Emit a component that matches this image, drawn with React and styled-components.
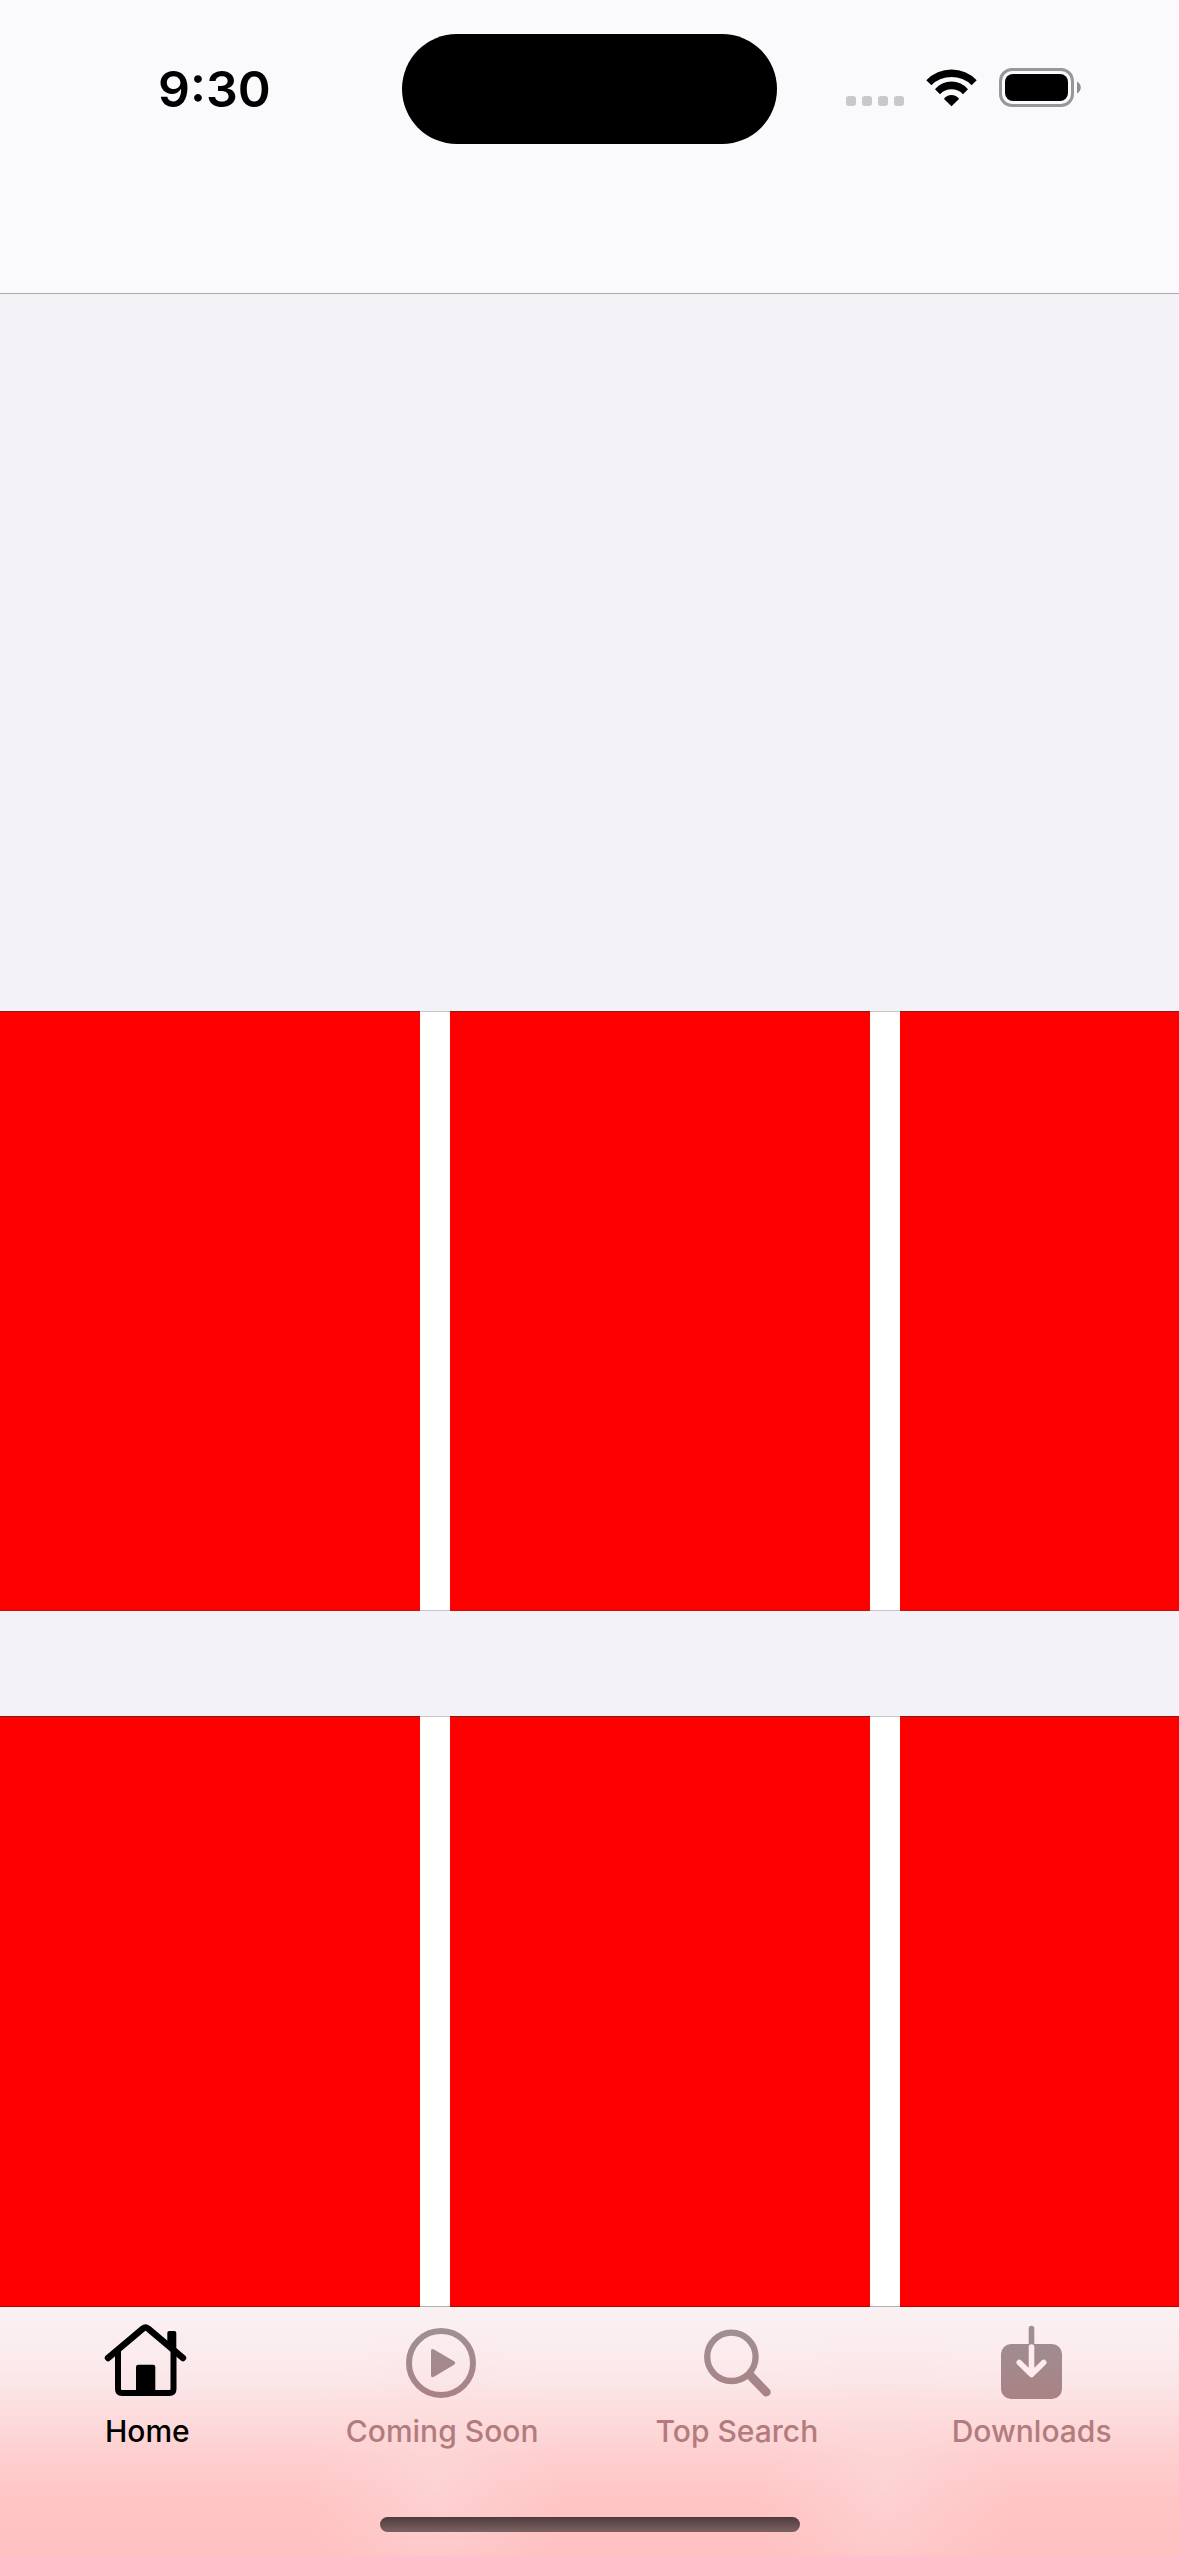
import React, { useState } from "react";
import styled, { createGlobalStyle } from "styled-components";

const GlobalStyle = createGlobalStyle`
  *, *::before, *::after { box-sizing: border-box; }
  body {
    margin: 0;
    background: #f2f2f7;
    font-family: Inter, "Liberation Sans", sans-serif;
    -webkit-font-smoothing: antialiased;
  }
`;

const Screen = styled.div`
  display: flex;
  flex-direction: column;
  height: 100vh;
  background: #f2f2f7;
`;

const Header = styled.header`
  flex: none;
  height: 294px;
  padding-top: 34px;
  background: #fafafc;
  border-bottom: 1px solid #a9a9ad;
`;

const StatusBar = styled.div`
  display: grid;
  grid-template-columns: 1fr 375px 1fr;
  align-items: center;
  height: 110px;
`;

const Time = styled.time`
  padding-left: 158px;
  font-size: 50px;
  line-height: 60px;
  font-weight: 600;
  color: #000;
`;

const Island = styled.div`
  height: 110px;
  border-radius: 55px;
  background: #000;
`;

const StatusIcons = styled.div`
  display: flex;
  justify-content: flex-end;
  align-items: flex-start;
  gap: 22px;
  padding: 0 98px 4px 0;

  svg { display: block; }
`;

const Feed = styled.main`
  flex: 1;
  min-height: 0;
  overflow-y: auto;
  scrollbar-width: none;
`;

const Hero = styled.section`
  height: 717px;
`;

const Shelf = styled.section`
  display: flex;
  gap: 30px;
  height: 600px;
  margin-bottom: 105px;
  overflow-x: auto;
  scrollbar-width: none;
  background: #fff;
  box-shadow: inset 0 1px #c6c6c8, inset 0 -1px #c6c6c8;
`;

const Poster = styled.article`
  flex: none;
  width: 420px;
  background: #f00;
  box-shadow: inset 0 1px #801c1f, inset 0 -1px #c61113;
`;

const BottomBar = styled.footer`
  position: relative;
  flex: none;
  display: flex;
  flex-direction: column;
  justify-content: space-between;
  height: 250px;
  margin-top: -1px;
  padding: 13px 0 24px;
  border-top: 1px solid rgba(0, 0, 0, 0.3);
  background:
    radial-gradient(ellipse 130px 170px at 37% 72%, rgba(251, 222, 222, 0.5), rgba(251, 222, 222, 0.2) 50%, rgba(251, 222, 222, 0)),
    radial-gradient(ellipse 130px 170px at 75% 72%, rgba(251, 222, 222, 0.5), rgba(251, 222, 222, 0.2) 50%, rgba(251, 222, 222, 0)),
    linear-gradient(#faf1f3 0, #fbebed 50px, #fbe5e7 80px, #fddadb 115px, #fecece 150px, #ffc5c5 195px, #ffc0c0 100%);
  background-clip: padding-box;
`;

const Tabs = styled.nav`
  display: grid;
  grid-template-columns: repeat(4, 1fr);
`;

const Tab = styled.button`
  display: flex;
  flex-direction: column;
  align-items: center;
  gap: 9px;
  padding: 0;
  border: 0;
  background: none;
  font-family: inherit;
  font-size: 30px;
  line-height: 36px;
  font-weight: 500;
  color: ${(p) => (p.$active ? "#000" : "#b27c7e")};
  cursor: pointer;
`;

const TabIcon = styled.svg`
  display: block;
  width: 90px;
  height: 84px;
  fill: none;
  stroke-linecap: round;
  stroke-linejoin: round;
`;

const HomeIndicator = styled.div`
  align-self: center;
  width: 420px;
  height: 15px;
  border-radius: 8px;
  background: linear-gradient(#4e3c3d, #7c6162);
`;

function SignalDots() {
  return (
    <svg width="58" height="38" viewBox="0 0 58 38" fill="#c8c8ca" aria-hidden="true">
      {[0, 16, 32, 48].map((x) => (
        <rect key={x} x={x} y="28" width="10" height="10" rx="3" />
      ))}
    </svg>
  );
}

function Wifi() {
  return (
    <svg width="51" height="39" viewBox="0 -1 51 39" fill="#000" aria-hidden="true">
      <path d="M0.3 11.2A35 35 0 0 1 50.7 11.2L45.6 16.2A28.7 28.7 0 0 0 5.4 16.2Z" />
      <path d="M9 20.2A21.5 21.5 0 0 1 42 20.2L37 25.2A15.7 15.7 0 0 0 14 25.2Z" />
      <path d="M18 30A9 9 0 0 1 33 30L25.5 37.3Z" />
    </svg>
  );
}

function Battery() {
  return (
    <svg width="82" height="39" viewBox="0 0 82 39" aria-hidden="true">
      <rect x="1.5" y="1.5" width="72" height="36" rx="11.5" fill="none" stroke="#979799" strokeWidth="3" />
      <rect x="6" y="6" width="63" height="27" rx="8" fill="#000" />
      <path d="M78 13.5C83 16 83 23 78 25.5Z" fill="#8e8e90" />
    </svg>
  );
}

function HomeIcon({ paint }) {
  return (
    <>
      <path d="M6 38L41 8.5Q43.5 6.5 46 8.5L81 38" stroke={paint} strokeWidth="6.4" />
      <path d="M16 31V69Q16 73 20 73H67.5Q71.5 73 71.5 69V31" stroke={paint} strokeWidth="6" />
      <path d="M65.3 24V13Q65.3 11 67.3 11H72.3Q74.3 11 74.3 13V33Z" fill={paint} />
      <path d="M34 73V47Q34 44.7 36.3 44.7H51Q53.3 44.7 53.3 47V73Z" fill={paint} />
    </>
  );
}

function PlayIcon({ paint }) {
  return (
    <>
      <circle cx="44" cy="43" r="32" stroke={paint} strokeWidth="6" />
      <path d="M34 31Q34 28 37 29.6L57 41.3Q59.4 43 57 44.7L37 56.7Q34 58.2 34 55Z" fill={paint} />
    </>
  );
}

function SearchIcon({ paint }) {
  return (
    <>
      <circle cx="39.4" cy="36.8" r="24.2" stroke={paint} strokeWidth="6.3" />
      <path d="M55 58.5L71 75C75.5 79.5 81.5 73 77.3 69L61.5 52.5Z" fill={paint} />
    </>
  );
}

function DownloadIcon({ paint }) {
  return (
    <>
      <rect x="14" y="24" width="61" height="55" rx="10" fill={paint} />
      <path d="M41.7 24V8.5A2.8 2.8 0 0 1 47.3 8.5V24Z" fill={paint} />
      <path d="M44.5 27V54M32.3 42.5L44.5 54.5L56.7 42.5" stroke="#fdebed" strokeWidth="5.6" />
    </>
  );
}

const tabs = [
  { label: "Home", Icon: HomeIcon },
  { label: "Coming Soon", Icon: PlayIcon },
  { label: "Top Search", Icon: SearchIcon },
  { label: "Downloads", Icon: DownloadIcon },
];

const shelves = [
  ["a", "b", "c"],
  ["d", "e", "f"],
];

export default function App() {
  const [active, setActive] = useState("Home");

  return (
    <Screen>
      <GlobalStyle />
      <Header>
        <StatusBar>
          <Time>9:30</Time>
          <Island />
          <StatusIcons>
            <SignalDots />
            <Wifi />
            <Battery />
          </StatusIcons>
        </StatusBar>
      </Header>
      <Feed>
        <Hero />
        {shelves.map((posters, i) => (
          <Shelf key={i}>
            {posters.map((id) => (
              <Poster key={id} />
            ))}
          </Shelf>
        ))}
      </Feed>
      <BottomBar>
        <Tabs>
          {tabs.map(({ label, Icon }, i) => (
            <Tab
              key={label}
              type="button"
              $active={label === active}
              aria-current={label === active ? "page" : undefined}
              onClick={() => setActive(label)}
            >
              <TabIcon viewBox="0 0 90 84" aria-hidden="true">
                <defs>
                  <linearGradient id={`tint${i}`} gradientUnits="userSpaceOnUse" x1="0" y1="5" x2="0" y2="80">
                    <stop offset="0" stopColor="#9e9094" />
                    <stop offset="1" stopColor="#a98285" />
                  </linearGradient>
                </defs>
                <Icon paint={label === active ? "#000" : `url(#tint${i})`} />
              </TabIcon>
              {label}
            </Tab>
          ))}
        </Tabs>
        <HomeIndicator />
      </BottomBar>
    </Screen>
  );
}
